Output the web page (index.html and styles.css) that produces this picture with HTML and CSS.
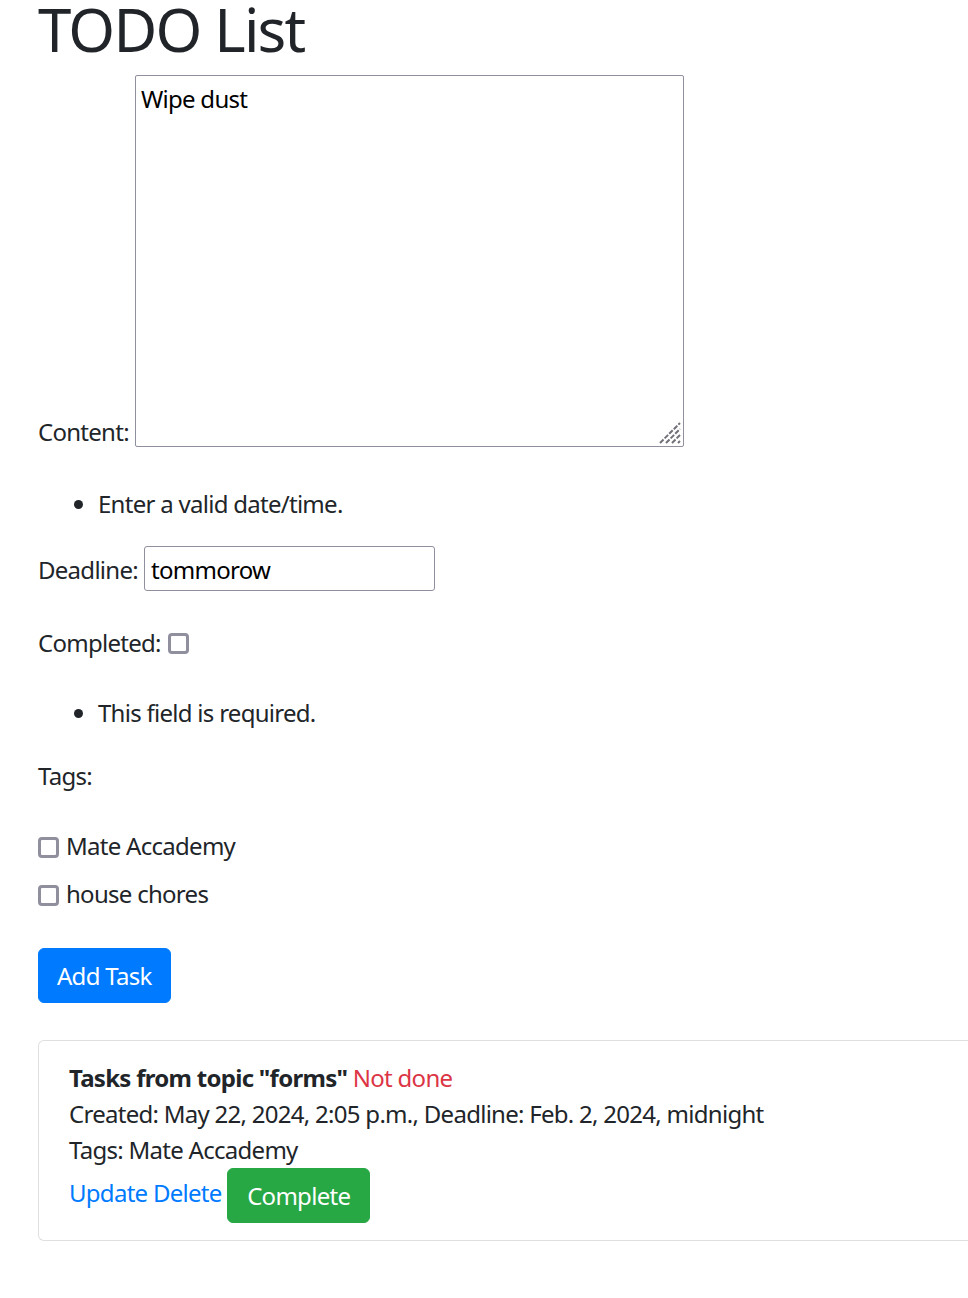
FILE: index.html
```html
<!DOCTYPE html>
<html lang="en">
<head>
<meta charset="utf-8">
<title>TODO List</title>
<link rel="stylesheet" href="styles.css">
</head>
<body>
<div class="page">
  <h1 class="title">TODO List</h1>
  <form class="task-form" action="#" method="post">
    <div class="field field-content">
      <label class="field-label" for="id_content">Content:</label>
      <span class="textarea-wrap">
        <textarea class="textarea" id="id_content" name="content">Wipe dust</textarea>
        <svg class="grip" width="22" height="22" viewBox="0 0 22 22" aria-hidden="true">
          <path d="M1 21 L21 1 M7 21 L21 7 M13 21 L21 13 M19 21 L21 19" stroke="#707078" stroke-width="2" stroke-dasharray="5 1.5" fill="none"/>
        </svg>
      </span>
    </div>
    <ul class="errorlist errorlist-date"><li>Enter a valid date/time.</li></ul>
    <div class="field field-deadline">
      <label class="field-label" for="id_deadline">Deadline:</label>
      <input class="text-input" type="text" id="id_deadline" name="deadline" value="tommorow">
    </div>
    <div class="field field-completed">
      <label class="field-label" for="id_completed">Completed:</label>
      <input class="check" type="checkbox" id="id_completed" name="completed">
    </div>
    <ul class="errorlist errorlist-tags"><li>This field is required.</li></ul>
    <div class="tags-label">Tags:</div>
    <div class="check-row check-row-first">
      <input class="check" type="checkbox" id="id_tags_0" name="tags">
      <label for="id_tags_0">Mate Accademy</label>
    </div>
    <div class="check-row check-row-second">
      <input class="check" type="checkbox" id="id_tags_1" name="tags">
      <label for="id_tags_1">house chores</label>
    </div>
    <button class="btn btn-primary" type="submit">Add Task</button>
  </form>
  <div class="card">
    <div class="card-body">
      <div class="task-line"><strong class="task-content">Tasks from topic "forms"</strong> <span class="status-not-done">Not done</span></div>
      <div class="task-line">Created: May 22, 2024, 2:05 p.m., Deadline: Feb. 2, 2024, midnight</div>
      <div class="task-line">Tags: Mate Accademy</div>
      <div class="task-line task-actions"><a class="task-link" href="#">Update</a> <a class="task-link" href="#">Delete</a> <button class="btn btn-success" type="button">Complete</button></div>
    </div>
  </div>
</div>
</body>
</html>
```

FILE: styles.css
```css
html, body {
  margin: 0;
  padding: 0;
  background: #fff;
}

body {
  font-family: "Noto Sans", "Open Sans", sans-serif;
  font-size: 24px;
  line-height: 36px;
  letter-spacing: -0.03em;
  color: #212529;
}

.page {
  padding-left: 38px;
  overflow: hidden;
}

.title {
  margin: 0;
  font-size: 60px;
  line-height: 58px;
  font-weight: 400;
  letter-spacing: -0.03em;
  color: #212529;
}

.task-form {
  margin: 0;
}

.field {
  display: flex;
}

.field-content {
  margin-top: 17px;
  align-items: flex-end;
  gap: 6px;
}

.field-content .field-label {
  margin-bottom: -3px;
}

.textarea-wrap {
  position: relative;
  display: block;
}

.textarea {
  display: block;
  box-sizing: border-box;
  width: 549px;
  height: 372px;
  margin: 0;
  padding: 5px 5px;
  border: 1px solid #8f8f9d;
  border-radius: 2px;
  font-family: inherit;
  font-size: 24px;
  line-height: 36px;
  letter-spacing: -0.03em;
  color: #000;
  background: #fff;
  resize: none;
  overflow: hidden;
}

.grip {
  position: absolute;
  right: 3px;
  bottom: 3px;
  display: block;
}

.errorlist {
  margin: 0;
  padding-left: 60px;
}

.errorlist-date {
  margin-top: 39px;
}

.errorlist-tags {
  margin-top: 34px;
}

.field-deadline {
  margin-top: 24px;
  align-items: baseline;
  gap: 6px;
}

.text-input {
  box-sizing: border-box;
  width: 291px;
  height: 45px;
  margin: 0;
  padding: 1px 6px 0;
  border: 1px solid #8f8f9d;
  border-radius: 3px;
  font-family: inherit;
  font-size: 24px;
  letter-spacing: -0.03em;
  color: #000;
  background: #fff;
}

.field-completed {
  margin-top: 34px;
  align-items: center;
  gap: 7px;
}

.check {
  appearance: none;
  -webkit-appearance: none;
  box-sizing: border-box;
  width: 21px;
  height: 21px;
  margin: 0;
  border: 3px solid #8f8f9d;
  border-radius: 4px;
  background: #fff;
  flex: none;
}

.field-completed .check {
  margin-top: 1px;
}

.tags-label {
  margin-top: 27px;
}

.check-row {
  display: flex;
  align-items: center;
  gap: 7px;
}

.check-row .check {
  margin-top: 3px;
}

.check-row-first {
  margin-top: 34px;
}

.check-row-second {
  margin-top: 12px;
}

.btn {
  box-sizing: border-box;
  display: inline-block;
  height: 55px;
  margin: 0;
  padding: 0 19px;
  border: 1px solid transparent;
  border-radius: 6px;
  font-family: inherit;
  font-size: 24px;
  line-height: 53px;
  letter-spacing: -0.03em;
  color: #fff;
  vertical-align: baseline;
  cursor: pointer;
}

.btn-primary {
  margin-top: 36px;
  padding: 0 18px;
  background: #007bff;
  border-color: #007bff;
}

.btn-success {
  background: #28a745;
  border-color: #28a745;
}

.card {
  margin-top: 37px;
  margin-right: -60px;
  border: 1px solid rgba(0, 0, 0, 0.125);
  border-radius: 6px;
  background: #fff;
}

.card-body {
  padding: 19px 30px 17px;
}

.task-content {
  font-weight: 700;
}

.status-not-done {
  color: #dc3545;
}

.task-link {
  color: #007bff;
  text-decoration: none;
  vertical-align: 3px;
}
```
